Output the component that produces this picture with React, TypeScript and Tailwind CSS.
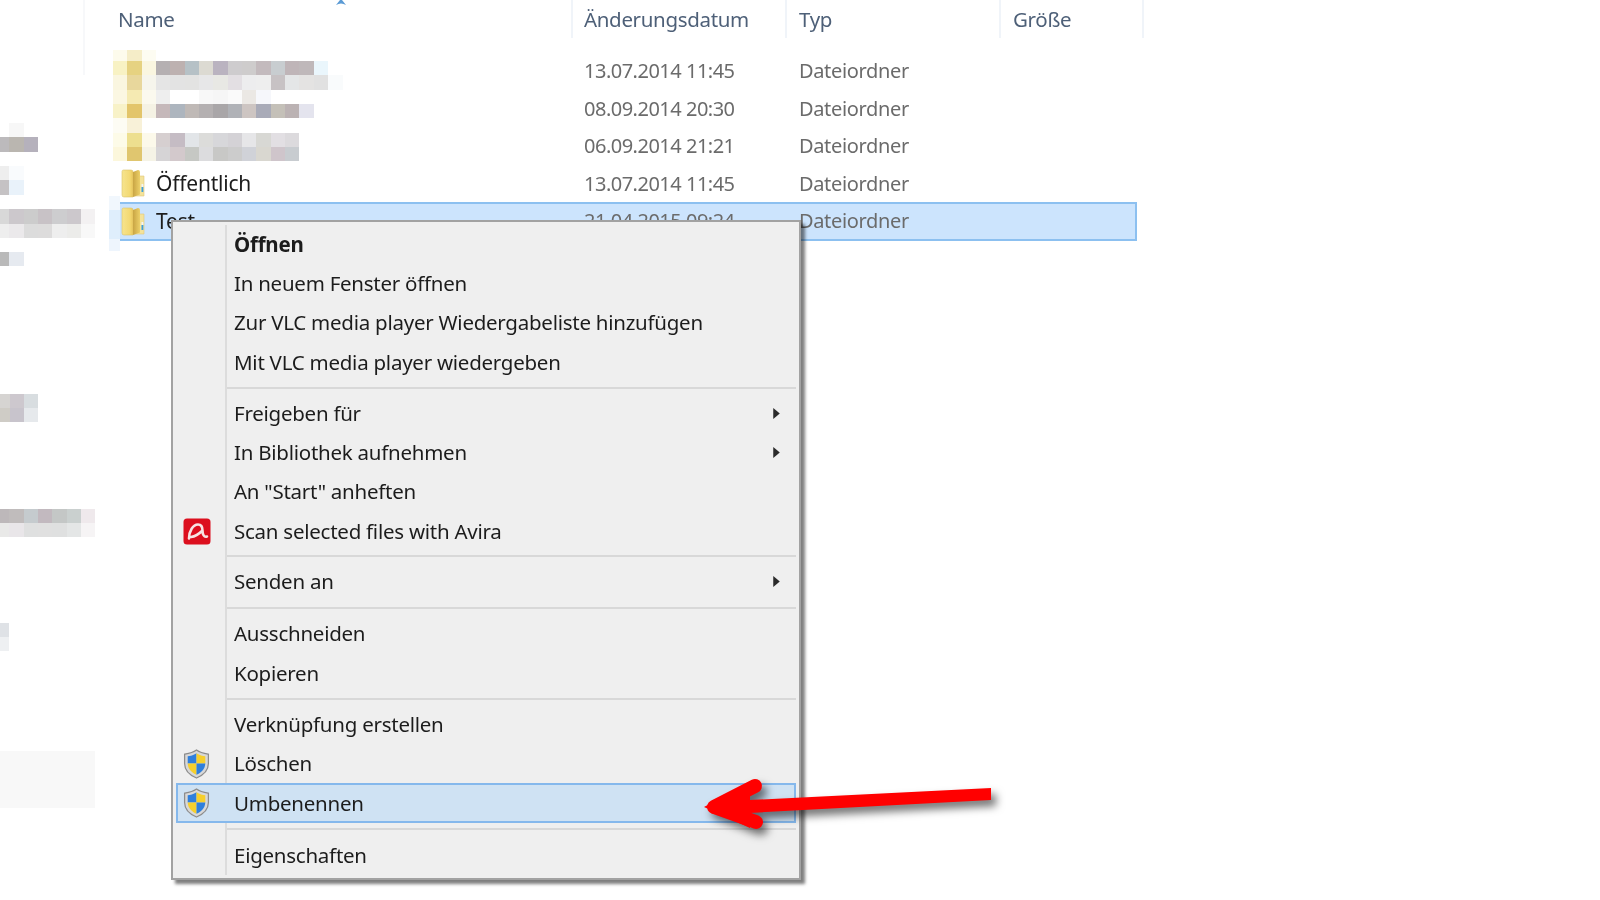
import React from "react";

const font = "font-['Noto_Sans','Open_Sans',sans-serif]";

const nameMosaic: { h: string; cells: string[] }[] = [
  { h: "h-[10.5px]", cells: ["bg-[#fdfbec]", "bg-[#f5edc8]", "bg-[#fdfcf2]"] },
  { h: "h-[14.5px]", cells: ["bg-[#f8f2c4]", "bg-[#e6d281]", "bg-[#faf6e0]", "bg-[#b5b0b2]", "bg-[#bdb1b0]", "bg-[#b6c1c6]", "bg-[#dcdad2]", "bg-[#bab3c0]", "bg-[#ceccce]", "bg-[#cecccc]", "bg-[#c3babd]", "bg-[#c8cdd0]", "bg-[#bfb5b8]", "bg-[#bfb8ba]", "bg-[#eaf6fc]"] },
  { h: "h-[14.5px]", cells: ["bg-[#faf6e0]", "bg-[#e8d79c]", "bg-[#f6f5ec]", "bg-[#e5e5e5]", "bg-[#e3e3e3]", "bg-[#e3e3e2]", "bg-[#e7e7e8]", "bg-[#e8e8e4]", "bg-[#e3dfe3]", "bg-[#ededee]", "bg-[#eeeeee]", "bg-[#c7c2c4]", "bg-[#e4e6e7]", "bg-[#e4e3e2]", "bg-[#e1e1e1]", "bg-[#f9fbfc]"] },
  { h: "h-[14px]", cells: ["bg-[#fbf7e2]", "bg-[#f5eab2]", "bg-[#fbf9ee]", "bg-[#eeeeee]", "bg-[#ffffff]", "bg-[#ffffff]", "bg-[#f8f8f8]", "bg-[#f6f6f6]", "bg-[#fafafa]", "bg-[#ebe8e4]", "bg-[#f6f7fb]"] },
  { h: "h-[14.5px]", cells: ["bg-[#f8f2c8]", "bg-[#e3c56a]", "bg-[#f5f2e4]", "bg-[#c5b8ba]", "bg-[#adb5be]", "bg-[#bfb9b6]", "bg-[#b4b0b1]", "bg-[#a9a6a8]", "bg-[#b0b2b7]", "bg-[#cdc5c2]", "bg-[#a9abb8]", "bg-[#c4c0b8]", "bg-[#bbb2b3]", "bg-[#e4e4ee]"] },
  { h: "h-[14.5px]", cells: ["bg-[#fdfcf4]", "bg-[#f8f1d8]"] },
  { h: "h-[14px]", cells: ["bg-[#fdfbe8]", "bg-[#eddf8f]", "bg-[#fcf9ea]", "bg-[#d6cfd0]", "bg-[#c5bcc4]", "bg-[#e2e5e8]", "bg-[#dcdcda]", "bg-[#d7d7da]", "bg-[#d4d2d6]", "bg-[#e6e6e8]", "bg-[#d8d8d4]", "bg-[#e2dfe3]", "bg-[#dcdadd]"] },
  { h: "h-[14.5px]", cells: ["bg-[#fcf7dc]", "bg-[#e0c66f]", "bg-[#f5f3e6]", "bg-[#d6d4d6]", "bg-[#d3c9cc]", "bg-[#c6c8c4]", "bg-[#dcdcde]", "bg-[#c8c8c6]", "bg-[#cccccc]", "bg-[#d0d2d8]", "bg-[#d9d7d0]", "bg-[#cfc5cb]", "bg-[#c8ccd0]"] },
];

const Mosaic = ({ rows }: { rows: { h: string; cells: string[] }[] }) => (
  <div className="flex flex-col">
    {rows.map((r, i) => (
      <div key={i} className={`flex ${r.h}`}>
        {r.cells.map((c, j) => (
          <div key={j} className={`w-[14.35px] shrink-0 ${c}`} />
        ))}
      </div>
    ))}
  </div>
);

const sideA = [
  { h: "h-[14px]", cells: ["bg-[#ffffff]", "bg-[#f7f7f7]"] },
  { h: "h-[15px]", cells: ["bg-[#bcbabc]", "bg-[#bab6b0]", "bg-[#b5b1bc]"] },
];

const Folder = () => (
  <svg width="24" height="29" viewBox="0 0 24 29" className="shrink-0">
    <defs>
      <linearGradient id="fa" x1="0" x2="1" y1="0" y2="0">
        <stop offset="0" stopColor="#f6e48e" />
        <stop offset="0.7" stopColor="#f3d973" />
        <stop offset="1" stopColor="#e9c55a" />
      </linearGradient>
      <linearGradient id="fb" x1="0" x2="1" y1="0" y2="0">
        <stop offset="0" stopColor="#c9a544" />
        <stop offset="1" stopColor="#eccf68" />
      </linearGradient>
    </defs>
    <path d="M18 7 H23 V27 H13 Z" fill="#f4e39b" stroke="#e0c878" strokeWidth="0.6" />
    <path d="M1 2.500 Q1 1 2.500 1 H10 Q12 1 12 3 V28 H3 Q1 28 1 26 Z" fill="url(#fa)" stroke="#dcc26a" strokeWidth="0.6" />
    <path d="M12 3 L17 1 Q19 1 19 3 V25.500 L12 28 Z" fill="url(#fb)" />
    <rect x="20.500" y="15" width="1.800" height="3" fill="#f4f4f4" />
    <rect x="20.500" y="18" width="1.800" height="5" fill="#3f9fdc" />
  </svg>
);

const Shield = () => (
  <svg width="27" height="30" viewBox="0 0 26 29">
    <path d="M13 1 C9 4 5 4.500 1.500 5 V14 C1.500 21 7 25.500 13 28 C19 25.500 24.500 21 24.500 14 V5 C21 4.500 17 4 13 1 Z" fill="#d8d8d8" stroke="#8c8c8c" strokeWidth="1.200" />
    <path d="M13 4 C10 6 7 6.500 4.500 7 V14 H13 Z" fill="#2f7fdc" />
    <path d="M13 4 C16 6 19 6.500 21.500 7 V14 H13 Z" fill="#f6cf2c" />
    <path d="M4.500 14 H13 V25 C8.500 23 4.800 19.500 4.500 14 Z" fill="#f6cf2c" />
    <path d="M21.500 14 H13 V25 C17.500 23 21.200 19.500 21.500 14 Z" fill="#2f7fdc" />
  </svg>
);

const Avira = () => (
  <svg width="28" height="27" viewBox="0 0 28 27">
    <rect x="0.500" y="0.500" width="27" height="26" rx="3.500" fill="#dc0f1e" />
    <path d="M6 20.500 C6 13 10 6.500 15 6.500 C19 6.500 19.500 10 19.500 12.500 C19.500 16.500 21 19.500 24 18.500 M8 19 C12 18.500 16 16 19.500 12.500" fill="none" stroke="#f7e4e4" strokeWidth="2.600" strokeLinecap="round" />
  </svg>
);

const Caret = () => (
  <svg width="9" height="13" viewBox="0 0 8 12" className="absolute right-[13px]">
    <path d="M1 1 L7 6 L1 11 Z" fill="#2a2a2a" />
  </svg>
);

const Item = ({ label, bold, icon, sub, active }: { label: string; bold?: boolean; icon?: React.ReactNode; sub?: boolean; active?: boolean }) => (
  <div className={`relative mx-[3px] flex h-[39.3px] items-center border-2 text-[20.5px] text-[#1c1c1c] ${active ? "border-[#85b8ec] bg-[#cfe2f3]" : "border-transparent"}`}>
    <div className="flex w-[49px] shrink-0 items-center pl-[5px]">{icon}</div>
    <span className={`pl-[7px] tracking-[-0.25px] ${bold ? "font-bold" : ""}`}>{label}</span>
    {sub && <Caret />}
  </div>
);

const Sep = ({ h = "h-[12px]" }: { h?: string }) => (
  <div className={`ml-[54px] mr-[3px] flex items-center ${h}`}>
    <div className="h-[2px] w-full bg-[#d8d8d8]" />
  </div>
);

const Cols = ({ date }: { date: string }) => (
  <>
    <div className="w-[214px] shrink-0 whitespace-nowrap pl-[11px] text-[20px] tracking-[-0.5px]">{date}</div>
    <div className="pl-[12px] text-[20px] tracking-[-0.35px]">Dateiordner</div>
  </>
);

const PlainRow = ({ date }: { date: string }) => (
  <div className="flex h-[37.6px] items-center text-[#6b6b6b]">
    <Cols date={date} />
  </div>
);

const Named = ({ text }: { text: string }) => (
  <div className="flex items-center">
    <span className="ml-[1px] flex"><Folder /></span>
    <span className="pl-[11px] text-[21px] tracking-[-0.2px] text-[#1c1c1c]">{text}</span>
  </div>
);

const HeaderCell = ({ w, label, pl }: { w: string; label: string; pl: string }) => (
  <div className={`flex h-[38px] items-center border-r-2 border-[#f0f4f9] text-[20.5px] tracking-[-0.33px] text-[#4e6078] ${w} ${pl}`}>{label}</div>
);

export default function App() {
  return (
    <div className={`relative flex h-[900px] w-[1600px] overflow-hidden bg-white blur-[0.5px] ${font}`}>
      {/* navigation pane, pixelated */}
      <aside className="flex w-[85px] shrink-0 flex-col">
        <div className="h-[75px] border-r-2 border-[#f7f8fa]" />
        <div className="mt-[48px] -ml-[5px]"><Mosaic rows={sideA} /></div>
        <div className="mt-[14px] -ml-[5px]">
          <Mosaic rows={[
            { h: "h-[14px]", cells: ["bg-[#eeeeee]", "bg-[#f9fbfd]"] },
            { h: "h-[15px]", cells: ["bg-[#c5c2c4]", "bg-[#e9f2fa]"] },
          ]} />
        </div>
        <div className="mt-[14px] -ml-[5px] w-[110px]">
          <Mosaic rows={[
            { h: "h-[15px]", cells: ["bg-[#d8d8d8]", "bg-[#ccc8cc]", "bg-[#cccccc]", "bg-[#c8c2c6]", "bg-[#cdcdcf]", "bg-[#ccc8cc]", "bg-[#f3f1f2]"] },
            { h: "h-[14px]", cells: ["bg-[#eeeeee]", "bg-[#ebe9eb]", "bg-[#dcdcdc]", "bg-[#dddcdc]", "bg-[#eeeeee]", "bg-[#ececea]", "bg-[#f8f8f8]"] },
          ]} />
        </div>
        <div className="mt-[14px] -ml-[5px]">
          <Mosaic rows={[{ h: "h-[14px]", cells: ["bg-[#b9b9b9]", "bg-[#e6eaf0]"] }]} />
        </div>
        <div className="mt-[128px] -ml-[19px]">
          <Mosaic rows={[
            { h: "h-[14px]", cells: ["bg-[#dad8d6]", "bg-[#d6d4d2]", "bg-[#cdc8ce]", "bg-[#d8dde0]"] },
            { h: "h-[14px]", cells: ["bg-[#d0cec8]", "bg-[#cfccc6]", "bg-[#c8c4cc]", "bg-[#e6e9ec]"] },
          ]} />
        </div>
        <div className="mt-[87px] -ml-[5px] w-[110px]">
          <Mosaic rows={[
            { h: "h-[14px]", cells: ["bg-[#bdb8ba]", "bg-[#c0bcbc]", "bg-[#c5cbce]", "bg-[#c2b9bf]", "bg-[#c4c7c6]", "bg-[#cad0cf]", "bg-[#efe9ec]"] },
            { h: "h-[14px]", cells: ["bg-[#e9e9e8]", "bg-[#e9e6e9]", "bg-[#dfe0e0]", "bg-[#e0e0e0]", "bg-[#dfe0e0]", "bg-[#e4e6e6]", "bg-[#f6f4f5]"] },
          ]} />
        </div>
        <div className="mt-[86px] -ml-[5px]">
          <Mosaic rows={[
            { h: "h-[14px]", cells: ["bg-[#dfe2e6]"] },
            { h: "h-[14px]", cells: ["bg-[#eef0f2]"] },
          ]} />
        </div>
        <div className="mt-[100px] h-[57px] w-[95px] bg-[#f8f8f8]" />
      </aside>

      {/* file list */}
      <main className="ml-[35px] flex flex-col">
        <div className="relative flex">
          <HeaderCell w="w-[453px]" pl="pl-0 -indent-[2px]" label="Name" />
          <HeaderCell w="w-[214px]" pl="pl-[11px]" label="Änderungsdatum" />
          <HeaderCell w="w-[214px]" pl="pl-[12px]" label="Typ" />
          <HeaderCell w="w-[143px]" pl="pl-[12px]" label="Größe" />
          <svg width="14" height="6" viewBox="0 0 14 6" className="absolute left-[213px] top-0">
            <path d="M3 5 L7 0 H9 L13 5 Q8 2 3 5 Z" fill="#5b9bd5" />
          </svg>
        </div>
        <div className="mt-[14.200px] flex items-start">
          <div className="-mt-[2px] -ml-[7px] w-[460px]"><Mosaic rows={nameMosaic} /></div>
          <div>
            <PlainRow date="13.07.2014 11:45" />
            <PlainRow date="08.09.2014 20:30" />
            <PlainRow date="06.09.2014 21:21" />
          </div>
        </div>
        <div className="flex h-[37.6px] w-[1017px] items-center text-[#6b6b6b]">
          <div className="w-[453px] shrink-0"><Named text="Öffentlich" /></div>
          <Cols date="13.07.2014 11:45" />
        </div>
        <div className="relative -mt-[0.700px] flex h-[39px] w-[1017px] items-center border-y-2 border-r-2 border-[#8cc0f0] bg-[#cce4fd] text-[#6b6b6b]">
          <div className="absolute -left-[11px] -top-[8px] flex w-[11px] flex-col">
            <div className="h-[14px] bg-[#f1f7fd]" />
            <div className="h-[29px] bg-[#dfeefc]" />
            <div className="h-[12px] bg-[#eef5fd]" />
          </div>
          <div className="w-[453px] shrink-0"><Named text="Test" /></div>
          <Cols date="21.04.2015 09:24" />
        </div>
      </main>

      {/* context menu */}
      <div className="absolute left-[171px] top-[220px] h-[660px] w-[630px] border-2 border-[#a2a2a2] bg-[#efefef] py-[2.400px] shadow-[4px_4px_3px_rgba(0,0,0,0.5)]">
        <div className="absolute bottom-[3px] left-[52px] top-[3px] w-[2px] bg-[#dcdcdc]" />
        <Item label="Öffnen" bold />
        <Item label="In neuem Fenster öffnen" />
        <Item label="Zur VLC media player Wiedergabeliste hinzufügen" />
        <Item label="Mit VLC media player wiedergeben" />
        <Sep />
        <Item label="Freigeben für" sub />
        <Item label="In Bibliothek aufnehmen" sub />
        <Item label={'An "Start" anheften'} />
        <Item label="Scan selected files with Avira" icon={<Avira />} />
        <Sep h="h-[11px]" />
        <Item label="Senden an" sub />
        <Sep h="h-[13px]" />
        <Item label="Ausschneiden" />
        <Item label="Kopieren" />
        <Sep />
        <Item label="Verknüpfung erstellen" />
        <Item label="Löschen" icon={<Shield />} />
        <Item label="Umbenennen" icon={<Shield />} active />
        <Sep h="h-[13px]" />
        <Item label="Eigenschaften" />
      </div>

      {/* red annotation arrow */}
      <svg width="320" height="80" viewBox="0 0 320 80" className="absolute left-[690px] top-[770px] drop-shadow-[5px_6px_4px_rgba(0,0,0,0.55)]">
        <path d="M40 31 L301 18 V30 L40 44 Z" fill="#ff0000" />
        <path d="M24 37 L65 16 M24 37 L66 52" fill="none" stroke="#ff0000" strokeWidth="14" strokeLinecap="round" />
        <path d="M14 37 L60 12 L60 58 Z" fill="#ff0000" />
      </svg>
    </div>
  );
}
